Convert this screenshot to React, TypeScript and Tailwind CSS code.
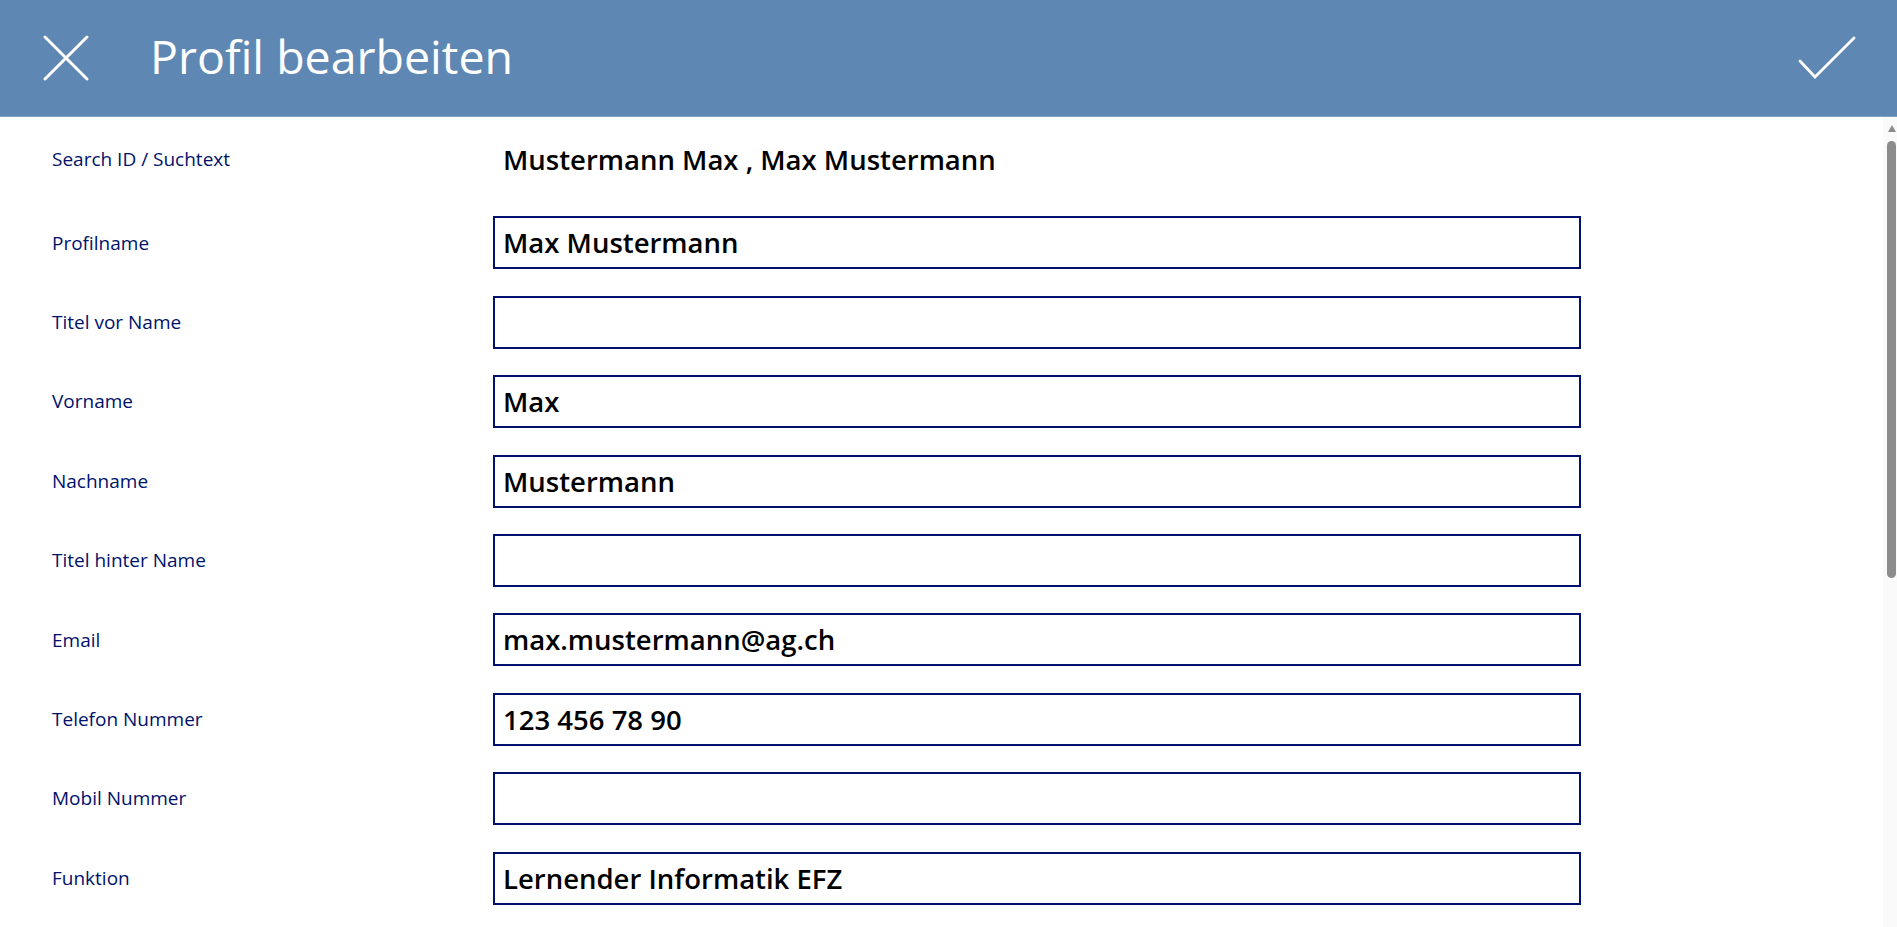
import React from 'react';

type Field = { label: string; value: string };

const fields: Field[] = [
    { label: 'Profilname', value: 'Max Mustermann' },
    { label: 'Titel vor Name', value: '' },
    { label: 'Vorname', value: 'Max' },
    { label: 'Nachname', value: 'Mustermann' },
    { label: 'Titel hinter Name', value: '' },
    { label: 'Email', value: 'max.mustermann@ag.ch' },
    { label: 'Telefon Nummer', value: '123 456 78 90' },
    { label: 'Mobil Nummer', value: '' },
    { label: 'Funktion', value: 'Lernender Informatik EFZ' },
];

const FormRow: React.FC<{ label: string; children: React.ReactNode; className?: string }> = ({ label, children, className }) => (
    <div className={`flex items-center h-[53px] shrink-0 ${className ?? ''}`}>
        <div className="w-[493px] shrink-0 pl-[52px] text-[19px] text-[#00126b]">{label}</div>
        {children}
    </div>
);

export default function App() {
    return (
        <div className="h-screen w-full flex flex-col overflow-hidden bg-white font-['Open_Sans',sans-serif]">
            {/* Header */}
            <header className="h-[117px] shrink-0 flex items-center bg-[#5e88b3] border-b border-[#7fa1c6]">
                <button aria-label="Schliessen" className="ml-[43px] w-[46px] h-[46px] flex items-center justify-center">
                    <svg width="46" height="46" viewBox="0 0 46 46" fill="none" stroke="white" strokeWidth="3" strokeLinecap="round">
                        <line x1="2" y1="2" x2="44" y2="44" />
                        <line x1="44" y1="2" x2="2" y2="44" />
                    </svg>
                </button>
                <h1 className="ml-[61px] text-[46.5px] leading-none text-white font-normal pb-[4px]">Profil bearbeiten</h1>
                <button aria-label="Speichern" className="ml-auto mr-[41px] w-[58px] h-[46px] flex items-center justify-center">
                    <svg width="58" height="46" viewBox="0 0 58 46" fill="none" stroke="white" strokeWidth="2.8" strokeLinecap="round">
                        <polyline points="2,26 17,42 56,3" />
                    </svg>
                </button>
            </header>

            <div className="flex flex-1 min-h-0">
                {/* Form */}
                <main className="flex-1 flex flex-col gap-[26.4px] pt-[16px] overflow-hidden">
                    <FormRow label="Search ID / Suchtext" className="mb-[4px]">
                        <div className="pl-[10px] text-[27.5px] font-semibold text-black">Mustermann Max , Max Mustermann</div>
                    </FormRow>
                    {fields.map(f => (
                        <FormRow key={f.label} label={f.label}>
                            <input
                                defaultValue={f.value}
                                className="w-[1088px] h-[53px] border-2 border-[#00126b] px-[8px] text-[27.5px] font-semibold text-black outline-none"
                            />
                        </FormRow>
                    ))}
                </main>

                {/* Scrollbar */}
                <div className="w-[14px] shrink-0 bg-[#fafafa] flex flex-col items-end pr-[1px]">
                    <div className="w-full flex justify-center pl-[4px] pt-[8px] h-[24px]">
                        <div className="w-0 h-0 border-l-[4px] border-r-[4px] border-b-[7px] border-l-transparent border-r-transparent border-b-[#8c8c8c]" />
                    </div>
                    <div className="w-[9px] h-[437px] rounded-[5px] bg-[#8c8c8c]" />
                </div>
            </div>
        </div>
    );
}
